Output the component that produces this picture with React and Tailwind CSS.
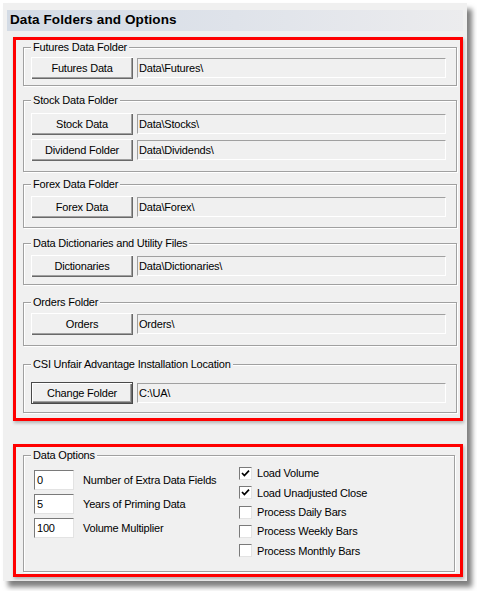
import React from "react";

const folders = [
  { title: "Futures Data Folder", mt: "mt-0", pad: "pt-[9px] pb-[6px]", rows: [["Futures Data", "Data\\Futures\\"]] },
  {
    title: "Stock Data Folder",
    mt: "mt-[14px]",
    pad: "pt-[12px] pb-[10px]",
    rows: [
      ["Stock Data", "Data\\Stocks\\"],
      ["Dividend Folder", "Data\\Dividends\\"],
    ],
  },
  { title: "Forex Data Folder", mt: "mt-[12px]", pad: "pt-[11px] pb-[9px]", rows: [["Forex Data", "Data\\Forex\\"]] },
  {
    title: "Data Dictionaries and Utility Files",
    mt: "mt-[15px]",
    pad: "pt-[11px] pb-[7px]",
    rows: [["Dictionaries", "Data\\Dictionaries\\"]],
  },
  { title: "Orders Folder", mt: "mt-[17px]", pad: "pt-[10px] pb-[10px]", rows: [["Orders", "Orders\\"]] },
  {
    title: "CSI Unfair Advantage Installation Location",
    mt: "mt-[18px]",
    pad: "pt-[17px] pb-[8px]",
    rows: [["Change Folder", "C:\\UA\\"]],
    primary: true,
  },
];

const options = [
  ["0", "Number of Extra Data Fields"],
  ["5", "Years of Priming Data"],
  ["100", "Volume Multiplier"],
];

const checks = [
  ["Load Volume", true],
  ["Load Unadjusted Close", true],
  ["Process Daily Bars", false],
  ["Process Weekly Bars", false],
  ["Process Monthly Bars", false],
];

// etched group box with its caption sitting on the top line
const Group = ({ title, className, children }) => (
  <div
    className={`relative border border-[#a0a0a0] shadow-[inset_1px_1px_0_#fff,1px_1px_0_#fff] ${className}`}
  >
    <span className="absolute -top-[8px] left-[7px] bg-[#f0f0f0] px-[2px] leading-[14px]">{title}</span>
    {children}
  </div>
);

const Button = ({ label, primary }) => (
  <button
    className={`w-[102px] h-[22px] flex items-center justify-center bg-[#f0f0f0] leading-none ${
      primary
        ? "border border-[#4a4a4a] shadow-[inset_1px_1px_0_#fff,inset_-1px_-1px_0_#696969,inset_-2px_-2px_0_#a0a0a0]"
        : "shadow-[inset_1px_1px_0_#fff,inset_-1px_-1px_0_#696969,inset_-2px_-2px_0_#a0a0a0]"
    }`}
  >
    {label}
  </button>
);

const Check = ({ on }) => (
  <span className="w-[13px] h-[13px] shrink-0 bg-white border border-t-[#7a7a7a] border-l-[#7a7a7a] border-r-[#e3e3e3] border-b-[#e3e3e3] flex items-center justify-center">
    {on && (
      <svg width="9" height="9" viewBox="0 0 9 9">
        <path d="M1 4 L3.4 6.6 L8 1.6" fill="none" stroke="#000" strokeWidth="1.7" />
      </svg>
    )}
  </span>
);

export default function App() {
  return (
    <div
      className="min-h-screen bg-white pt-[3px] pl-[3px] text-[11px] text-black tracking-[-0.2px]"
      style={{ fontFamily: '"Liberation Sans", Arial, sans-serif' }}
    >
      <div className="w-[464px] h-[578px] bg-[#f0f0f0] px-[4px] pt-[7px] shadow-[5px_6px_5px_rgba(0,0,0,0.5)]">
        <div className="h-[21px] flex items-center pl-[3px] bg-gradient-to-r from-[#d3dbe5] via-[#dfe3ea] to-[#ececee] text-[13.5px] font-bold tracking-[0.1px]">
          Data Folders and Options
        </div>

        <div className="ml-[6px] mt-[6px] border-[3px] border-[#ff0000] pl-[7px] pr-[3px] pt-[7px] pb-[5px] shadow-[1px_2px_3px_rgba(0,0,0,0.25)]">
          {folders.map((g) => (
            <Group key={g.title} title={g.title} className={`${g.mt} ${g.pad} pl-[7px]`}>
              <div className="flex flex-col gap-[4px]">
                {g.rows.map(([btn, path]) => (
                  <div key={btn} className="flex items-center gap-[4px]">
                    <Button label={btn} primary={g.primary} />
                    <div className="w-[309px] h-[20px] flex items-center pl-[1px] border border-t-[#a0a0a0] border-l-[#a0a0a0] border-r-white border-b-white">
                      {path}
                    </div>
                  </div>
                ))}
              </div>
            </Group>
          ))}
        </div>

        <div className="ml-[6px] mt-[23px] h-[133px] border-[3px] border-[#ff0000] pl-[7px] pr-[5px] pt-[8px] shadow-[1px_2px_3px_rgba(0,0,0,0.25)]">
          <Group title="Data Options" className="h-[117px] pl-[10px] pt-[8px] flex">
            <div className="w-[205px] mt-[6px] flex flex-col gap-[4px]">
              {options.map(([val, label]) => (
                <div key={label} className="flex items-center gap-[9px]">
                  <div className="w-[40px] h-[20px] bg-white flex items-center pl-[2px] border border-t-[#7a7a7a] border-l-[#7a7a7a] border-r-[#e3e3e3] border-b-[#e3e3e3]">
                    {val}
                  </div>
                  <span>{label}</span>
                </div>
              ))}
            </div>
            <div className="flex flex-col">
              {checks.map(([label, on]) => (
                <div key={label} className="h-[19.3px] flex items-center gap-[5px]">
                  <Check on={on} />
                  <span>{label}</span>
                </div>
              ))}
            </div>
          </Group>
        </div>
      </div>
    </div>
  );
}
